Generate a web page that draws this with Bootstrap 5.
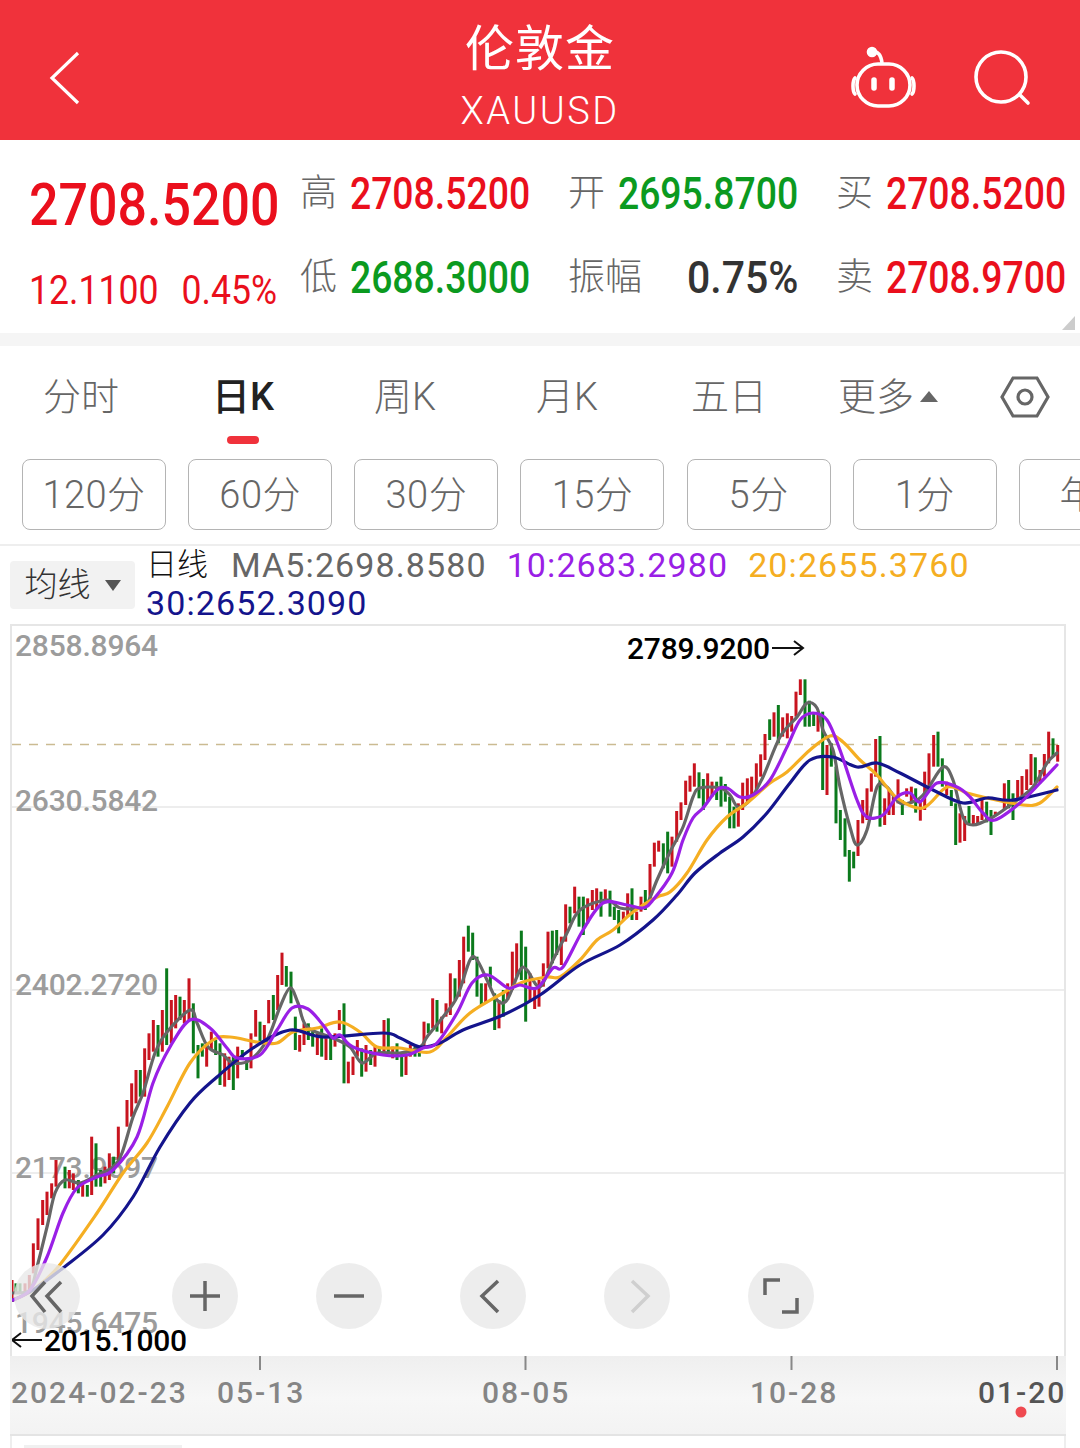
<!DOCTYPE html>
<html lang="zh-CN">

<head>
    <meta charset="UTF-8">
    <title>伦敦金 XAUUSD</title>
    <meta name="viewport" content="width=device-width, initial-scale=1">
    <link href="https://cdn.jsdelivr.net/npm/bootstrap@5.3.0/dist/css/bootstrap.min.css" rel="stylesheet">
    <style>
        body {
            width: 1080px;
            height: 1448px;
            overflow: hidden;
            background: #fff;
            font-family: Roboto, "Noto Sans CJK SC", sans-serif;
        }

        svg {
            display: block;
        }

        /* header */
        .top-bar {
            height: 140px;
            background: #f0323b;
            color: #fff;
        }

        .top-side {
            flex: 1;
            padding-top: 18px;
        }

        .top-title {
            font-size: 49px;
            line-height: 60px;
            font-weight: 400;
            letter-spacing: 1px;
            margin-top: 20px;
        }

        .top-code {
            font-size: 38px;
            line-height: 44px;
            font-weight: 300;
            letter-spacing: 2.5px;
            margin-top: 9px;
        }

        /* quote block: the digits are a narrow face, so Roboto is squeezed */
        .quote-box {
            height: 193px;
        }

        .quote-left {
            width: 300px;
            padding: 33px 0 0 29px;
            color: #ea0f1c;
        }

        .quote-last {
            font-size: 59px;
            line-height: 64px;
            font-weight: 500;
            transform: scaleX(.88);
            transform-origin: left;
            white-space: nowrap;
        }

        .quote-change {
            font-size: 40px;
            line-height: 44px;
            margin-top: 32px;
            gap: 26px;
            transform: scaleX(.89);
            transform-origin: left;
            white-space: nowrap;
        }

        .quote-grid {
            display: grid;
            grid-template-columns: repeat(3, 230px);
            column-gap: 38px;
            row-gap: 34px;
            align-content: start;
            padding-top: 29px;
        }

        .quote-cell {
            height: 50px;
        }

        .quote-label {
            font-size: 37px;
            font-weight: 300;
            color: #666;
        }

        .quote-val {
            font-size: 45px;
            font-weight: 500;
            margin-left: -34px;
            transform: scaleX(.83);
            transform-origin: right;
        }

        .quote-val.flat {
            transform: scaleX(.91);
        }

        .up {
            color: #ea0f1c;
        }

        .down {
            color: #0b9a1f;
        }

        .flat {
            color: #333;
        }

        .quote-corner {
            right: 5px;
            bottom: 3px;
        }

        .strip {
            height: 13px;
            background: #f5f5f5;
        }

        /* period tabs */
        .tab-row {
            height: 102px;
        }

        .tab-item {
            width: 162px;
            font-size: 38px;
            font-weight: 300;
            color: #666;
        }

        .tab-item.on {
            color: #222;
            font-weight: 500;
        }

        .tab-mark {
            width: 32px;
            height: 8px;
            left: 65px;
            bottom: 4px;
            background: #f0323b;
            border-radius: 4px;
        }

        .tab-more {
            gap: 6px;
            margin-left: -3px;
        }

        .tab-gear {
            margin-left: 31px;
        }

        /* minute buttons */
        .itv-row {
            height: 98px;
            padding: 11px 0 0 22px;
            gap: 22.17px;
            border-bottom: 2px solid #eee;
            overflow: hidden;
        }

        .itv-btn {
            flex: 0 0 144px;
            height: 71px;
            border: 1.5px solid #b4b4b4;
            border-radius: 8px;
            padding: 0;
            color: #666;
            font-size: 38px;
            font-weight: 300;
            letter-spacing: .5px;
            line-height: 66px;
        }

        /* moving average legend */
        .ma-row {
            height: 76px;
            padding-left: 10px;
            gap: 11px;
        }

        .ma-pick {
            width: 125px;
            height: 48px;
            margin-top: 15px;
            background: #f2f2f2;
            border-radius: 4px;
            font-size: 33px;
            font-weight: 300;
            color: #333;
            gap: 14px;
        }

        .ma-text {
            width: 900px;
            column-gap: 20px;
            font-size: 34px;
            line-height: 38px;
            letter-spacing: 1.1px;
        }

        .ma-day {
            color: #111;
            font-size: 31px;
            font-weight: 300;
            letter-spacing: 0;
            margin-right: 3px;
        }

        .ma5 {
            color: #666;
        }

        .ma10 {
            color: #9a1fe6;
        }

        .ma20 {
            color: #f5ae22;
        }

        .ma30 {
            color: #14148c;
        }

        /* chart */
        .chart-box {
            width: 1056px;
            height: 732px;
            margin: 2px 0 0 10px;
            border: 2px solid #e6e6e6;
            border-bottom: 0;
        }

        .axis-num {
            font-family: Roboto, sans-serif;
            font-size: 30px;
            font-weight: 500;
            letter-spacing: -.2px;
            fill: #9c9c9c;
        }

        .axis-mark {
            font-family: Roboto, sans-serif;
            font-size: 30px;
            font-weight: 500;
            letter-spacing: -.2px;
            fill: #000;
        }

        .zoom-bar {
            left: 2px;
            bottom: 27px;
            gap: 78px;
        }

        .zoom-btn {
            width: 66px;
            height: 66px;
            background: rgba(232, 232, 232, .8);
        }

        .zoom-btn:first-child {
            margin-right: 14px;
        }

        .zoom-btn svg {
            fill: none;
            stroke: #666;
            stroke-width: 3.5;
        }

        .zoom-btn .off {
            stroke: #cfcfcf;
        }

        .xaxis {
            width: 1056px;
            height: 80px;
            margin-left: 10px;
            background: linear-gradient(#efefef, #f7f7f7 55%, #f3f3f3);
            border-bottom: 2px solid #e4e4e4;
        }

        .xaxis text {
            font-family: Roboto, sans-serif;
            font-size: 30px;
            font-weight: 500;
            letter-spacing: 2px;
            fill: #858585;
        }

        .xaxis .now {
            fill: #555;
        }

        .foot {
            width: 1056px;
            height: 12px;
            margin-left: 10px;
            padding: 9px 0 0 12px;
            border-left: 2px solid #eee;
            border-right: 2px solid #eee;
        }

        .foot-tab {
            width: 158px;
            height: 3px;
            background: #f0f0f0;
        }
    </style>
</head>

<body>

    <!-- Header -->
    <div class="top-bar d-flex">
        <div class="top-side d-flex align-items-center">
            <svg width="140" height="60" viewBox="0 50 140 60" fill="none" stroke="#fff" stroke-width="3.2">
                <path d="M78 54 52 79 78 104" />
            </svg>
        </div>
        <div class="text-center">
            <div class="top-title">伦敦金</div>
            <div class="top-code">XAUUSD</div>
        </div>
        <div class="top-side d-flex align-items-center justify-content-end">
            <svg width="230" height="70" viewBox="850 44 230 70" fill="none" stroke="#fff" stroke-width="3.6">
                <path d="M873 52c5-1 8 3 9 11" />
                <circle cx="872" cy="52" r="3.5" fill="#fff" />
                <rect x="857" y="64" width="53" height="42" rx="21" />
                <path d="M855 78c-2 2-2 5-2 8s0 6 2 8M912 78c2 2 2 5 2 8s0 6-2 8" stroke-linecap="round" />
                <path d="M874 80v8M892 80v8" stroke-width="5.5" stroke-linecap="round" />
                <circle cx="1001" cy="77" r="25" />
                <path d="M1020 95l8 8" stroke-linecap="round" />
            </svg>
        </div>
    </div>

    <!-- Quote -->
    <div class="quote-box d-flex position-relative">
        <div class="quote-left">
            <div class="quote-last">2708.5200</div>
            <div class="quote-change d-flex">
                <span>12.1100</span>
                <span>0.45%</span>
            </div>
        </div>
        <div class="quote-grid">
            <div class="quote-cell d-flex justify-content-between align-items-center">
                <span class="quote-label">高</span><span class="quote-val up">2708.5200</span>
            </div>
            <div class="quote-cell d-flex justify-content-between align-items-center">
                <span class="quote-label">开</span><span class="quote-val down">2695.8700</span>
            </div>
            <div class="quote-cell d-flex justify-content-between align-items-center">
                <span class="quote-label">买</span><span class="quote-val up">2708.5200</span>
            </div>
            <div class="quote-cell d-flex justify-content-between align-items-center">
                <span class="quote-label">低</span><span class="quote-val down">2688.3000</span>
            </div>
            <div class="quote-cell d-flex justify-content-between align-items-center">
                <span class="quote-label">振幅</span><span class="quote-val flat">0.75%</span>
            </div>
            <div class="quote-cell d-flex justify-content-between align-items-center">
                <span class="quote-label">卖</span><span class="quote-val up">2708.9700</span>
            </div>
        </div>
        <svg class="quote-corner position-absolute" width="13" height="14" viewBox="0 0 13 14">
            <polygon points="13,0 13,14 0,14" fill="#ccc" />
        </svg>
    </div>
    <div class="strip"></div>

    <!-- Period tabs -->
    <div class="tab-row d-flex align-items-center">
        <div class="tab-item text-center">分时</div>
        <div class="tab-item on text-center position-relative h-100 d-flex align-items-center justify-content-center">
            日K<span class="tab-mark position-absolute"></span>
        </div>
        <div class="tab-item text-center">周K</div>
        <div class="tab-item text-center">月K</div>
        <div class="tab-item text-center">五日</div>
        <div class="tab-item tab-more d-flex align-items-center justify-content-center">
            更多
            <svg width="18" height="12" viewBox="0 0 18 12"><polygon points="9,0 18,11 0,11" fill="#666" /></svg>
        </div>
        <svg class="tab-gear" width="50" height="46" viewBox="0 0 50 46" fill="none" stroke="#666" stroke-width="3.2">
            <polygon points="2,23 13,4 37,4 48,23 37,42 13,42" />
            <circle cx="25" cy="23" r="7" />
        </svg>
    </div>

    <!-- Minute intervals -->
    <div class="itv-row d-flex">
        <button type="button" class="btn itv-btn">120分</button>
        <button type="button" class="btn itv-btn">60分</button>
        <button type="button" class="btn itv-btn">30分</button>
        <button type="button" class="btn itv-btn">15分</button>
        <button type="button" class="btn itv-btn">5分</button>
        <button type="button" class="btn itv-btn">1分</button>
        <button type="button" class="btn itv-btn">年K</button>
    </div>

    <!-- MA legend -->
    <div class="ma-row d-flex">
        <div class="ma-pick d-flex align-items-center justify-content-center">
            均线
            <svg width="16" height="11" viewBox="0 0 16 11"><polygon points="0,0 16,0 8,11" fill="#555" /></svg>
        </div>
        <div class="ma-text d-flex flex-wrap">
            <span class="ma-day">日线</span>
            <span class="ma5">MA5:2698.8580</span>
            <span class="ma10">10:2683.2980</span>
            <span class="ma20">20:2655.3760</span>
            <span class="ma30">30:2652.3090</span>
        </div>
    </div>

    <!-- K line chart -->
    <div class="chart-box position-relative">
        <svg id="kline" width="1052" height="730" viewBox="12 626 1052 730">
            <g id="grid">
                <path d="M12 807H1064M12 990H1064M12 1173H1064" stroke="#e8e8e8" stroke-width="1.5" />
                <path d="M12 744.5H1064" stroke="#cbbb92" stroke-width="1.5" stroke-dasharray="9 8" />
                <text class="axis-num" x="15" y="656">2858.8964</text>
                <text class="axis-num" x="15" y="811">2630.5842</text>
                <text class="axis-num" x="15" y="995">2402.2720</text>
                <text class="axis-num" x="15" y="1178">2173.9597</text>
                <text class="axis-num" x="15" y="1333">1945.6475</text>
            </g>
            <g id="bars"></g>
            <g id="lines" fill="none" stroke-width="3.2" stroke-linejoin="round" stroke-linecap="round"></g>
        </svg>

        <!-- Zoom controls -->
        <div class="zoom-bar position-absolute d-flex">
            <div class="zoom-btn rounded-circle">
                <svg width="66" height="66" viewBox="0 0 66 66"><path d="M31 19 18 33 31 49M47 19 33 33 47 49" /></svg>
            </div>
            <div class="zoom-btn rounded-circle">
                <svg width="66" height="66" viewBox="0 0 66 66"><path d="M18 33H48M33 18V48" /></svg>
            </div>
            <div class="zoom-btn rounded-circle">
                <svg width="66" height="66" viewBox="0 0 66 66"><path d="M18 33H48" /></svg>
            </div>
            <div class="zoom-btn rounded-circle">
                <svg width="66" height="66" viewBox="0 0 66 66"><path d="M38 18 22 33 38 49" /></svg>
            </div>
            <div class="zoom-btn rounded-circle">
                <svg width="66" height="66" viewBox="0 0 66 66"><path class="off" d="M28 18 44 33 28 49" /></svg>
            </div>
            <div class="zoom-btn rounded-circle">
                <svg width="66" height="66" viewBox="0 0 66 66"><path d="M17 32V17H32M49 35V49H34" /></svg>
            </div>
        </div>

        <svg class="position-absolute top-0 start-0" width="1052" height="730" viewBox="12 626 1052 730">
            <text class="axis-mark" x="627" y="659">2789.9200</text>
            <path d="M772 648H803M794 641 803 648 794 655" fill="none" stroke="#111" stroke-width="2" />
            <text class="axis-mark" x="44" y="1351">2015.1000</text>
            <path d="M42 1340H12M21 1333 12 1340 21 1347" fill="none" stroke="#111" stroke-width="2" />
        </svg>
    </div>

    <!-- Date axis -->
    <div class="xaxis">
        <svg width="1056" height="78" viewBox="10 1356 1056 78">
            <path d="M260 1356v14M525.5 1356v14M791.5 1356v14M1057 1356v14" stroke="#888" stroke-width="2" />
            <text x="11" y="1403">2024-02-23</text>
            <text x="217" y="1403">05-13</text>
            <text x="482" y="1403">08-05</text>
            <text x="750" y="1403">10-28</text>
            <text class="now" x="978" y="1403">01-20</text>
            <circle cx="1021" cy="1412" r="5.5" fill="#ef4a50" />
        </svg>
    </div>
    <div class="foot">
        <div class="foot-tab"></div>
    </div>

    <script src="https://cdn.jsdelivr.net/npm/bootstrap@5.3.0/dist/js/bootstrap.bundle.min.js"></script>

    <script>
        const SVG_NS = "http://www.w3.org/2000/svg";

        // bars read off the picture at 3x: colour, x, top, bottom, relative to ox/oy
        const barGroups = [
            {
                ox: 0, oy: 940, bars: `r36 1020 1085 g48 1030 1060 g60 1030 1060 r75 1030 1060 r88 1005 1060 r100 910 1000
                r114 835 930 r128 780 855 r141 755 825 r155 730 775 r168 660 740 g195 680 745 r208 690 745 r220 700 750
                g235 720 760 r248 730 770 g262 735 770 r275 590 765 g288 610 740 g302 690 740 r315 680 730 r328 640 720
                g341 650 700 r355 560 660 r381 480 560 r395 430 530 r408 390 490 g421 390 470 r434 325 470 r447 280 360
                r460 240 335 g474 255 350 r487 210 335 g500 85 315 r514 180 310 r527 165 265 g540 170 240 r553 180 250
                r567 115 240 g580 190 340 g594 315 415 g607 310 350 r620 310 380 r634 275 330 g647 300 345 g660 310 435
                r674 340 440 r687 350 420 g700 350 450 r713 320 415 g727 330 360 g740 360 390 r753 280 385 r767 210 290
                g780 245 310 r793 255 310 r806 180 250 g820 165 240 r833 105 210 r846 38 135 g859 78 140 g873 95 190
                g886 230 330 r899 285 335 r912 250 315 g925 250 300 g938 275 320 r952 280 345 g965 265 350 r978 295 360
                g992 290 360 r1005 280 320 r1018 210 270 g1032 190 430 r1045 365 430 r1059 350 405 r1072 300 350
                g1085 325 410 r1098 315 395 g1112 330 375 r1125 320 380 g1138 320 345 r1152 240 340 g1165 235 340
                r1178 320 355 g1191 310 360 g1205 340 410 r1218 340 405 r1231 315 350 g1245 320 350 g1258 330 350
                r1272 245 320 g1285 250 280 r1298 175 265 g1311 180 275`
            },
            {
                ox: 420, oy: 860, bars: `r65 470 520 r78 430 470 r91 340 465 g105 355 420 r118 300 410 r131 230 370
                g145 197 275 g158 218 300 g171 290 410 g184 370 435 r197 370 430 g211 320 380 g224 400 510 r237 420 505
                g250 390 470 r263 370 420 r277 275 390 r290 250 350 g304 212 360 g317 260 485 r330 340 420 r344 390 447
                r357 360 440 r370 310 380 r384 215 325 g397 212 310 g410 210 285 r424 230 315 r437 133 245 g450 140 190
                r464 80 160 g477 110 200 g490 110 225 r503 115 190 r517 90 150 r530 85 150 g543 95 170 r556 88 130
                g570 92 170 g583 140 180 g596 150 220`
            },
            {
                ox: 620, oy: 740, bars: `r10 515 540 r23 460 530 g36 445 540 r50 515 540 r63 470 515 g76 450 510
                r90 372 480 r103 308 380 r116 302 335 g130 310 385 g143 275 400 r156 290 380 r170 213 305 r183 187 240
                r197 122 195 r210 107 155 r223 70 140 g237 97 175 g250 117 210 r263 100 185 r276 125 170 g290 125 180
                g303 110 200 g316 132 185 g329 170 265`
            },
            {
                ox: 700, oy: 660, bars: `g102 440 505 r115 430 500 r128 368 450 r142 355 430 r155 350 410 r169 310 390
                r182 283 350 r195 222 300 g209 178 240 r222 157 230 g235 135 250 r248 172 230 r262 160 235 r275 168 215
                r288 95 170 r301 58 105 g315 58 200 g328 122 200 g341 160 198 r354 165 215 g368 155 390 r381 255 405
                g394 250 320 g408 320 490 g421 450 540 g435 475 590 g448 570 665 g461 575 625 r474 480 588 r488 420 490
                r501 385 480 r514 340 395 r527 237 350 g540 228 500 r554 415 495 r567 390 465 r580 410 465 r594 358 430
                g607 420 465 r620 385 410 r634 380 430 g647 385 458 r661 420 482 r674 335 450 r687 280 380 r701 225 320
                g714 215 320 g727 295 380 r740 365 405 g754 390 438 g767 430 555 r780 460 548 r794 468 543 g807 438 495
                r820 465 497 r833 468 490 r846 420 480 g860 425 487 g873 450 525 r886 455 465 r913 370 450 g926 360 445
                g939 400 480 r953 360 420 r966 348 410 r980 328 390 r993 282 375 g1006 292 380 r1020 330 370 r1033 282 350
                r1046 215 310 g1059 235 290 r1073 255 305`
            }
        ];

        const maLines = [
            ["#666", "13,1293 30,1290 37,1267 47,1227 55,1193 65,1180 80,1183 97,1175 113,1167 122,1153 133,1117 143,1093 155,1053 167,1032 190,1010 197,1023 208,1047 223,1055 233,1063 250,1060 267,1040 280,1007 290,988 298,1003 307,1027 333,1038 350,1047 362,1063 377,1053 400,1053 420,1047 427,1037 443,1017 457,997 470,960 477,960 487,980 497,1000 507,1000 520,970 527,970 540,987 553,960 567,933 580,910 607,900 620,908 640,908 648,902 657,880 670,852 683,827 693,797 700,788 720,788 730,795 738,807 750,800 763,777 780,737 797,717 807,703 817,708 823,730 833,750 840,787 850,827 857,845 867,830 877,787 887,787 900,803 917,800 927,790 943,767 953,780 963,817 973,825 993,817 1013,803 1033,787 1047,763 1057,753"],
            ["#f5ae22", "13,1300 33,1290 58,1267 97,1213 123,1173 147,1143 167,1107 190,1063 213,1040 230,1037 257,1042 277,1043 293,1032 317,1028 340,1022 360,1032 377,1047 400,1048 430,1052 447,1037 470,1013 503,993 523,982 547,977 560,977 580,960 597,940 613,930 633,912 657,897 670,892 687,873 707,840 727,817 747,803 770,783 787,772 810,750 830,736 843,742 860,760 877,775 897,798 923,808 947,787 967,793 987,798 1023,805 1040,803 1057,787"],
            ["#14148c", "13,1300 33,1290 63,1268 103,1235 133,1197 160,1147 190,1103 217,1077 253,1048 290,1030 323,1037 383,1033 400,1038 420,1047 440,1043 463,1030 503,1015 540,995 580,965 620,945 653,920 677,895 695,873 720,853 743,837 767,813 790,783 810,760 833,757 857,767 877,763 900,773 933,790 963,803 987,798 1013,800 1057,790"],
            ["#9a1fe6", "13,1300 30,1290 47,1257 63,1213 77,1188 97,1177 113,1170 137,1137 153,1083 170,1047 190,1020 210,1028 227,1048 237,1058 260,1055 277,1030 292,1008 308,1009 323,1025 333,1038 340,1035 353,1047 383,1055 407,1055 423,1048 437,1043 457,1013 472,983 488,975 508,988 520,985 537,988 553,968 563,967 583,930 603,903 627,905 643,908 653,900 672,873 683,840 693,818 703,808 717,790 727,788 740,797 753,795 770,780 787,747 800,720 813,713 827,720 840,750 857,800 867,817 883,815 897,797 910,793 920,802 937,783 957,787 970,797 983,813 995,820 1020,803 1040,783 1057,765"]
        ];

        const barsEl = document.getElementById("bars");
        barGroups.forEach(group => {
            const items = group.bars.trim().split(/\s+/);
            for (let i = 0; i < items.length; i += 3) {
                const rect = document.createElementNS(SVG_NS, "rect");
                const top = group.oy + items[i + 1] / 3;
                rect.setAttribute("x", group.ox + items[i].slice(1) / 3 - 1.5);
                rect.setAttribute("y", top);
                rect.setAttribute("width", 3);
                rect.setAttribute("height", group.oy + items[i + 2] / 3 - top);
                rect.setAttribute("fill", items[i][0] === "r" ? "#c8141f" : "#0b7a1c");
                barsEl.appendChild(rect);
            }
        });

        // catmull-rom so the averages come out as curves, not corners
        function smoothPath(str) {
            const p = str.split(" ").map(s => s.split(",").map(Number));
            let d = `M${p[0]}`;
            for (let i = 0; i < p.length - 1; i++) {
                const a = p[i - 1] || p[i], b = p[i], c = p[i + 1], e = p[i + 2] || c;
                d += `C${b[0] + (c[0] - a[0]) / 6},${b[1] + (c[1] - a[1]) / 6} ${c[0] - (e[0] - b[0]) / 6},${c[1] - (e[1] - b[1]) / 6} ${c[0]},${c[1]}`;
            }
            return d;
        }

        const linesEl = document.getElementById("lines");
        maLines.forEach(([color, points]) => {
            const line = document.createElementNS(SVG_NS, "path");
            line.setAttribute("d", smoothPath(points));
            line.setAttribute("stroke", color);
            linesEl.appendChild(line);
        });
    </script>
</body>

</html>
